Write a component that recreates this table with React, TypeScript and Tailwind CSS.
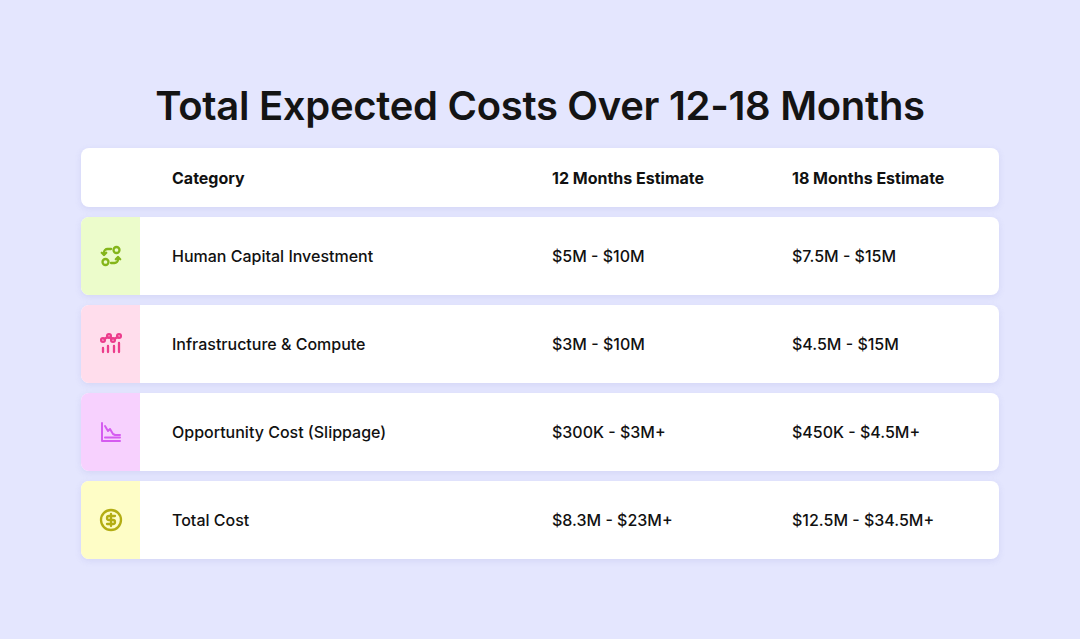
import { CircleDollarSign } from "lucide-react";

const ExchangeIcon = () => (
  <svg width="24" height="24" viewBox="0 0 24 24" fill="none" stroke="currentColor" strokeWidth="2.3" strokeLinecap="round" strokeLinejoin="round">
    <circle cx="17.5" cy="6" r="3" />
    <circle cx="6.5" cy="18" r="3" />
    <path d="M12 5h-3.5a3.5 3.5 0 0 0 -3.5 3.5v2" />
    <path d="M2.8 8.8l2.2 2.2l2.2 -2.2" />
    <path d="M12 19h3.5a3.5 3.5 0 0 0 3.5 -3.5v-2" />
    <path d="M16.8 15.2l2.2 -2.2l2.2 2.2" />
  </svg>
);

const DotsBarsIcon = () => (
  <svg width="24" height="24" viewBox="0 0 24 24" fill="none" stroke="currentColor" strokeWidth="2.3" strokeLinecap="round" strokeLinejoin="round">
    <circle cx="4" cy="8" r="1.9" />
    <circle cx="10" cy="4" r="1.9" />
    <circle cx="14" cy="8" r="1.9" />
    <circle cx="20" cy="4" r="1.9" />
    <path d="M5.5 7l3 -2M11.5 5l1.2 1.8M15.5 7l3 -2" />
    <path d="M4 16v4M9 14v6M15 14v6M20 11v9" />
  </svg>
);

const DeclineIcon = () => (
  <svg width="24" height="24" viewBox="0 0 24 24" fill="none" stroke="currentColor" strokeWidth="2" strokeLinecap="round" strokeLinejoin="round">
    <path d="M3 3v18h18" />
    <path d="M6 6l3 5l2 -2l3 5l2 1h5" />
    <path d="M6 17.5h15" />
  </svg>
);

const rows = [
  {
    icon: <ExchangeIcon />,
    bg: "bg-[#ECFCCB]",
    color: "text-[#84B51A]",
    name: "Human Capital Investment",
    m12: "$5M - $10M",
    m18: "$7.5M - $15M",
  },
  {
    icon: <DotsBarsIcon />,
    bg: "bg-[#FFDDEC]",
    color: "text-[#EC3C8C]",
    name: "Infrastructure & Compute",
    m12: "$3M - $10M",
    m18: "$4.5M - $15M",
  },
  {
    icon: <DeclineIcon />,
    bg: "bg-[#F7D1FE]",
    color: "text-[#D55CF0]",
    name: "Opportunity Cost (Slippage)",
    m12: "$300K - $3M+",
    m18: "$450K - $4.5M+",
  },
  {
    icon: <CircleDollarSign size={24} strokeWidth={2.3} />,
    bg: "bg-[#FEFDC6]",
    color: "text-[#B3AD14]",
    name: "Total Cost",
    m12: "$8.3M - $23M+",
    m18: "$12.5M - $34.5M+",
  },
];

export default function App() {
  return (
    <div className="w-[1080px] h-[639px] bg-[#E4E6FE] flex flex-col items-center pt-[82px] font-['Inter',sans-serif] text-[#111111]">
      <h1 className="text-[40px] leading-[48px] font-semibold tracking-[-0.3px] text-[#141414]">
        Total Expected Costs Over 12-18 Months
      </h1>

      <div className="w-[918px] mt-[18px] flex flex-col gap-[10px]">
        {/* Header */}
        <div className="h-[59px] bg-white rounded-lg shadow-[0_2px_6px_rgba(120,120,200,0.15)] flex items-center text-[16px] font-bold">
          <div className="w-[59px]" />
          <div className="w-[380px] pl-[32px]">Category</div>
          <div className="w-[240px] pl-[32px]">12 Months Estimate</div>
          <div className="flex-1 pl-[32px]">18 Months Estimate</div>
        </div>

        {rows.map((r) => (
          <div
            key={r.name}
            className="h-[78px] bg-white rounded-lg overflow-hidden shadow-[0_2px_6px_rgba(120,120,200,0.15)] flex items-center text-[16px] font-[450]"
          >
            <div className={`w-[59px] h-full flex items-center justify-center ${r.bg} ${r.color}`}>
              {r.icon}
            </div>
            <div className="w-[380px] pl-[32px]">{r.name}</div>
            <div className="w-[240px] pl-[32px]">{r.m12}</div>
            <div className="flex-1 pl-[32px]">{r.m18}</div>
          </div>
        ))}
      </div>
    </div>
  );
}
